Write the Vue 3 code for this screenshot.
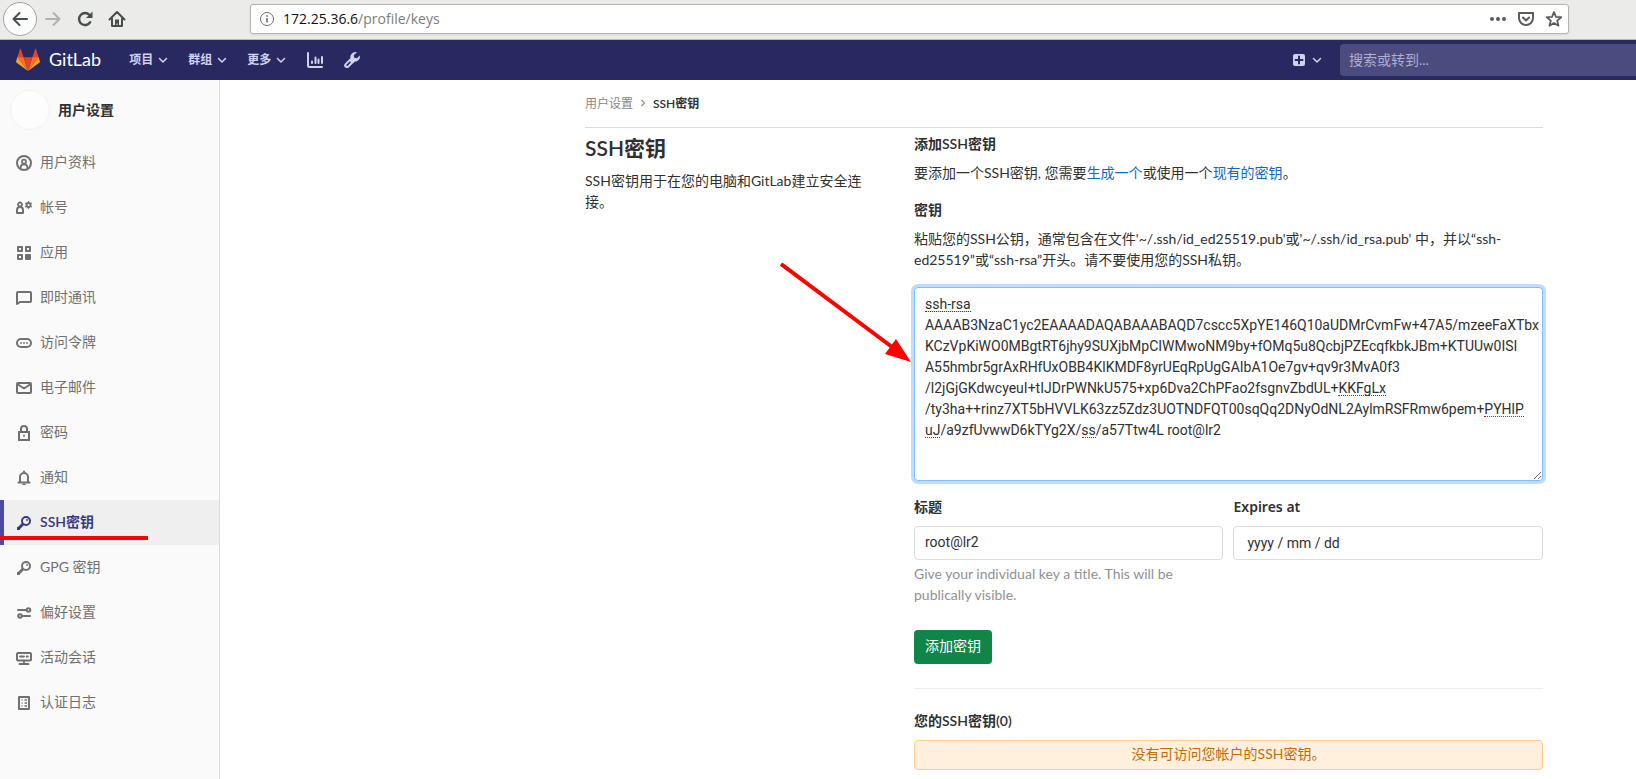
<script setup>
import { ref } from 'vue'

const sections = ['项目', '群组', '更多']

const links = [
  { label: '用户资料', icon: 'profile' },
  { label: '帐号', icon: 'account' },
  { label: '应用', icon: 'apps' },
  { label: '即时通讯', icon: 'chat' },
  { label: '访问令牌', icon: 'token' },
  { label: '电子邮件', icon: 'mail' },
  { label: '密码', icon: 'lock' },
  { label: '通知', icon: 'bell' },
  { label: 'SSH密钥', icon: 'key', active: true },
  { label: 'GPG 密钥', icon: 'key' },
  { label: '偏好设置', icon: 'prefs' },
  { label: '活动会话', icon: 'monitor' },
  { label: '认证日志', icon: 'log' },
]

const publicKey = ref(
  [
    'ssh-rsa',
    'AAAAB3NzaC1yc2EAAAADAQABAAABAQD7cscc5XpYE146Q10aUDMrCvmFw+47A5/mzeeFaXTbx',
    'KCzVpKiWO0MBgtRT6jhy9SUXjbMpCIWMwoNM9by+fOMq5u8QcbjPZEcqfkbkJBm+KTUUw0ISI',
    'A55hmbr5grAxRHfUxOBB4KlKMDF8yrUEqRpUgGAIbA1Oe7gv+qv9r3MvA0f3',
    '/l2jGjGKdwcyeuI+tIJDrPWNkU575+xp6Dva2ChPFao2fsgnvZbdUL+KKFgLx',
    '/ty3ha++rinz7XT5bHVVLK63zz5Zdz3UOTNDFQT00sqQq2DNyOdNL2AylmRSFRmw6pem+PYHlP',
    'uJ/a9zfUvwwD6kTYg2X/ss/a57Ttw4L root@lr2',
  ].join('\n')
)
const title = ref('root@lr2')
const address = ref('172.25.36.6/profile/keys')
</script>

<template>
  <div class="page">
    <div class="browser">
      <button class="tool back" aria-label="Back">
        <svg width="18" height="18" viewBox="0 0 18 18"><path d="M16 9H2.5M8.5 3l-6 6 6 6" fill="none" stroke="#4a4d4e" stroke-width="2" stroke-linecap="round" stroke-linejoin="round" /></svg>
      </button>
      <button class="tool" aria-label="Forward">
        <svg width="18" height="18" viewBox="0 0 18 18"><path d="M2 9h13.5M9.500 3l6 6-6 6" fill="none" stroke="#b0b1b0" stroke-width="2" stroke-linecap="round" stroke-linejoin="round" /></svg>
      </button>
      <button class="tool" aria-label="Reload">
        <svg width="18" height="18" viewBox="0 0 18 18"><path d="M14.200 12.200A6 6 0 1 1 13.500 5" fill="none" stroke="#4a4d4e" stroke-width="2.400" stroke-linecap="round" /><path d="M16.500 1.500V8h-6.500z" fill="#4a4d4e" /></svg>
      </button>
      <button class="tool" aria-label="Home">
        <svg width="18" height="18" viewBox="0 0 18 18"><path d="M1.500 9.500L9 2l7.500 7.500M4 8.500V16h10V8.500" fill="none" stroke="#4a4d4e" stroke-width="2" stroke-linecap="round" stroke-linejoin="round" /><path d="M7 9.500h4V16H9.500v-2.500h-1V16H7z" fill="#4a4d4e" /></svg>
      </button>
      <div class="address">
        <svg width="16" height="16" viewBox="0 0 16 16"><circle cx="8" cy="8" r="6.500" fill="none" stroke="#6b6b6b" /><path d="M8 7v4.500M8 4.200v1.600" stroke="#6b6b6b" stroke-width="1.600" /></svg>
        <div class="url" role="textbox" :aria-label="address"><span>172.25.36.6</span>/profile/keys</div>
        <button class="mini" aria-label="Page actions">
          <svg width="18" height="18" viewBox="0 0 18 18" fill="#5b5b5b"><circle cx="3" cy="9" r="2" /><circle cx="9" cy="9" r="2" /><circle cx="15" cy="9" r="2" /></svg>
        </button>
        <button class="mini" aria-label="Save">
          <svg width="18" height="18" viewBox="0 0 18 18" fill="none" stroke="#5b5b5b" stroke-width="2" stroke-linecap="round" stroke-linejoin="round"><path d="M2 3h14v5a7 7 0 0 1-14 0zM6 7.500l3 3 3-3" /></svg>
        </button>
        <button class="mini" aria-label="Bookmark">
          <svg width="18" height="18" viewBox="0 0 18 18" fill="none" stroke="#5b5b5b" stroke-width="1.800" stroke-linejoin="round"><path d="M9 2l2 4.800 5.200.4-4 3.400 1.300 5.100L9 13l-4.500 2.700 1.300-5.100-4-3.400 5.200-.4z" /></svg>
        </button>
      </div>
    </div>

    <header class="navbar">
      <a class="brand" href="#">
        <svg width="24" height="24" viewBox="0 0 36 36"><path fill="#e24329" d="M2 14l9.380 9v-9l-4-12.280c-.205-.632-1.176-.632-1.380 0zM34 14l-9.380 9v-9l4-12.280c.205-.632 1.176-.632 1.380 0z" /><path fill="#e24329" d="M18 34.380L24.380 14H11.620z" /><path fill="#fc6d26" d="M18 34.380L11.380 14H2zM18 34.380L24.620 14H34z" /><path fill="#fca326" d="M2 14L.1 20.160c-.18.565 0 1.200.5 1.560l17.420 12.660zM34 14l1.900 6.160c.18.565 0 1.200-.5 1.560L18 34.380z" /></svg>
        <span>GitLab</span>
      </a>
      <nav class="sections" aria-label="Main">
        <button v-for="s in sections" :key="s">
          {{ s }}
          <svg width="10" height="10" viewBox="0 0 10 10"><path d="M1.500 3.500L5 7l3.500-3.500" fill="none" stroke="#d1d1f0" stroke-width="1.500" stroke-linecap="round" stroke-linejoin="round" /></svg>
        </button>
        <a href="#" aria-label="Activity"><svg width="16" height="16" viewBox="0 0 16 16" fill="none" stroke="#d1d1f0" stroke-width="2" stroke-linecap="round"><path d="M1 1v12.500A1.500 1.500 0 0 0 2.500 15H15M5 9.500V11M8.500 5.500V11M11.500 7.500V11M15 5v6" /></svg></a>
        <a href="#" aria-label="Admin"><svg width="16" height="16" viewBox="0 0 16 16"><path d="M8.200 8.200L3 13.400" fill="none" stroke="#d1d1f0" stroke-width="5.500" stroke-linecap="round" /><path d="M14 .9A5 5 0 0 0 6.400 6l3.700 3.700A5 5 0 0 0 15.700 3.500L13 6.200 10.300 5.700 9.800 3.200 12.600.4z" fill="#d1d1f0" /><path d="M6 10.300L3.200 13.100" fill="none" stroke="#292961" stroke-width="1.600" stroke-linecap="round" /></svg></a>
      </nav>
      <div class="right">
        <button class="plus" aria-label="New">
          <svg width="12" height="12" viewBox="0 0 12 12"><rect width="12" height="12" rx="2" fill="#d1d1f0" /><path d="M6 2.500v7M2.500 6h7" stroke="#292961" stroke-width="2" stroke-linecap="round" /></svg>
          <svg width="10" height="10" viewBox="0 0 10 10"><path d="M1.500 3.500L5 7l3.500-3.500" fill="none" stroke="#d1d1f0" stroke-width="1.500" stroke-linecap="round" stroke-linejoin="round" /></svg>
        </button>
        <input class="search" type="text" placeholder="搜索或转到..." aria-label="搜索或转到" />
      </div>
    </header>

    <div class="body">
      <aside class="sidebar">
        <div class="context"><span class="avatar"></span><strong>用户设置</strong></div>
        <a v-for="l in links" :key="l.label" href="#" class="link" :class="{ active: l.active }">
          <svg width="16" height="16" viewBox="0 0 16 16" fill="none" stroke="currentColor" stroke-width="2" stroke-linecap="round" stroke-linejoin="round">
            <template v-if="l.icon === 'profile'"><circle cx="8" cy="8" r="7" /><circle cx="8" cy="6.700" r="2" stroke-width="1.700" /><path d="M4.700 13v-1c0-1.700 1.300-2.700 3.300-2.700s3.300 1 3.300 2.700v1" stroke-width="1.700" /></template>
            <template v-else-if="l.icon === 'account'"><circle cx="4" cy="4.500" r="2" stroke-width="1.800" /><path d="M1 13v-3a3 3 0 0 1 6 0v3z" /><circle cx="12.500" cy="5" r="2" /><path d="M12.500 1.700v6.600M9.700 3.300l5.600 3.400M9.700 6.700l5.600-3.400" stroke-width="1.300" /><circle cx="12.500" cy="5" r="1" stroke="none" fill="#fafafa" /></template>
            <template v-else-if="l.icon === 'apps'"><path d="M2 2h4v4H2zM10 2h4v4h-4zM2 10h4v4H2z" /><path d="M10 10h4v4h-4z" fill="currentColor" /></template>
            <path v-else-if="l.icon === 'chat'" d="M1 14V3a1 1 0 0 1 1-1h12a1 1 0 0 1 1 1v8a1 1 0 0 1-1 1H4z" />
            <template v-else-if="l.icon === 'token'"><rect x="1" y="4" width="14" height="8" rx="4" /><path d="M5 8h.01M8 8h.01M11 8h.01" stroke-width="1.800" /></template>
            <template v-else-if="l.icon === 'mail'"><rect x="1" y="3" width="14" height="10" rx="1" /><path d="M2 4.500l6 4 6-4" /></template>
            <template v-else-if="l.icon === 'lock'"><path d="M3 7h10v8H3zM5 7V4a3 3 0 0 1 6 0v3" stroke-linejoin="miter" /><path d="M8 10.800h.01" /></template>
            <template v-else-if="l.icon === 'bell'"><path d="M2.500 12.500h11M4 12V7a4 4 0 0 1 8 0v5M8 2v-.5" /><path d="M7 14.300h2" stroke-width="1.500" /></template>
            <template v-else-if="l.icon === 'key'"><circle cx="10" cy="6" r="4" /><path d="M7 9L2 14" stroke-width="3" stroke-linecap="butt" /><path d="M1 12h3v3H1z" stroke="none" fill="currentColor" /><path d="M11 5h.01" stroke-width="1.800" /></template>
            <template v-else-if="l.icon === 'prefs'"><path d="M2 5h8M14 11H7" /><circle cx="12.500" cy="5" r="1.800" /><circle cx="4" cy="11" r="1.800" /></template>
            <template v-else-if="l.icon === 'monitor'"><rect x="1" y="3" width="14" height="7.500" rx="1" /><path d="M4 6.500h4M10.500 6.500h1.500M8 11v2.500M3.500 14h9" stroke-width="1.800" /></template>
            <template v-else><rect x="3" y="2" width="10" height="12" /><path d="M5.500 5h1M8.500 5H11M5.500 8h1M8.500 8H11M5.500 11h1M8.500 11H11" stroke-width="1.500" stroke-linecap="butt" /></template>
          </svg>
          <span>{{ l.label }}</span>
        </a>
      </aside>

      <main class="content">
        <nav class="crumbs" aria-label="Breadcrumb">
          <a href="#">用户设置</a>
          <svg width="8" height="8" viewBox="0 0 8 8"><path d="M2.500 1l3 3-3 3" fill="none" stroke="#919191" stroke-width="1.300" /></svg>
          <strong>SSH密钥</strong>
        </nav>
        <div class="row">
          <section class="intro">
            <h4>SSH密钥</h4>
            <p>SSH密钥用于在您的电脑和GitLab建立安全连接。</p>
          </section>
          <section class="main">
            <h5>添加SSH密钥</h5>
            <p class="hint">要添加一个SSH密钥, 您需要<a href="#">生成一个</a>或使用一个<a href="#">现有的密钥</a>。</p>
            <form @submit.prevent>
              <label for="key">密钥</label>
              <p>粘贴您的SSH公钥，通常包含在文件'~/.ssh/id_ed25519.pub'或'~/.ssh/id_rsa.pub' 中，并以“ssh-ed25519”或“ssh-rsa”开头。请不要使用您的SSH私钥。</p>
              <div class="keybox">
                <textarea id="key" v-model="publicKey" rows="8" spellcheck="false"></textarea>
                <i class="typo t1"></i><i class="typo t2"></i><i class="typo t3"></i><i class="typo t4"></i><i class="typo t5"></i>
              </div>
              <div class="fields">
                <div>
                  <label for="title">标题</label>
                  <input id="title" v-model="title" type="text" />
                  <p class="help">Give your individual key a title. This will be publically visible.</p>
                </div>
                <div>
                  <label for="expires">Expires at</label>
                  <input id="expires" class="date" type="text" placeholder="yyyy / mm / dd" />
                </div>
              </div>
              <button class="submit" type="submit">添加密钥</button>
            </form>
            <hr />
            <h5>您的SSH密钥(0)</h5>
            <div class="alert">没有可访问您帐户的SSH密钥。</div>
          </section>
        </div>
        <svg class="arrow" width="132" height="100" viewBox="0 0 132 100"><path d="M1 1L112 84" stroke="#f00" stroke-width="4" /><path d="M131 99L116 76 105 91z" fill="#f00" /></svg>
      </main>
    </div>
    <div class="marker"></div>
  </div>
</template>

<style>
body {
  overflow: hidden;
}
</style>

<style scoped>
.page {
  position: relative;
  display: flex;
  flex-direction: column;
  min-height: 100vh;
  overflow: hidden;
  background: #fff;
  color: #303030;
  font: 14px/21px Lato, "Noto Sans CJK SC", sans-serif;
}
.page * {
  box-sizing: border-box;
}
button,
input,
textarea {
  margin: 0;
  font: inherit;
  color: inherit;
}
button {
  padding: 0;
  border: 0;
  background: none;
}
a {
  color: #1068bf;
  text-decoration: none;
}
svg {
  flex: none;
  display: block;
}
strong,
h4,
h5,
label {
  font-weight: 600;
}
p,
h4,
h5 {
  margin: 0;
}
.browser {
  display: flex;
  align-items: center;
  height: 40px;
  padding: 0 67px 2px 3px;
  background: #ebebea;
  border-bottom: 1px solid #b8b8b8;
}
.tool {
  display: grid;
  place-items: center;
  width: 32px;
  height: 32px;
}
.tool.back {
  width: 34px;
  height: 34px;
  border: 1px solid #a5a5a4;
  border-radius: 50%;
  background: #fcfcfc;
}
.address {
  display: flex;
  align-items: center;
  gap: 10px;
  flex: 1;
  height: 30px;
  margin-left: 117px;
  padding: 0 5px 0 8px;
  background: #fff;
  border: 1px solid #b4b4b2;
  border-radius: 3px;
  box-shadow: 0 1px 3px rgba(0, 0, 0, 0.08);
}
.url {
  flex: 1;
  margin-left: -2px;
  font-family: "Open Sans", sans-serif;
  font-size: 14px;
  color: #7d7d7d;
}
.url span {
  color: #111;
}
.navbar {
  display: flex;
  align-items: center;
  height: 40px;
  padding-left: 16px;
  background: #292961;
  color: #d1d1f0;
}
.brand {
  display: flex;
  align-items: center;
  gap: 9px;
  color: #fff;
  font-size: 18px;
}
.brand span {
  padding-bottom: 2px;
}
.sections {
  display: flex;
  align-items: center;
  gap: 20px;
  margin-left: 28px;
}
.sections button {
  display: flex;
  align-items: center;
  gap: 5px;
  padding-bottom: 1px;
  font-size: 12px;
  font-weight: 600;
}
.sections a {
  margin-left: 1px;
}
.right {
  display: flex;
  align-items: center;
  gap: 18px;
  margin-left: auto;
}
.plus {
  display: flex;
  align-items: center;
  gap: 7px;
}
.search {
  width: 296px;
  height: 32px;
  padding: 0 9px 2px;
  border: 0;
  border-radius: 4px 0 0 4px;
  background: #4b4b7d;
}
.search::placeholder {
  color: #aeaed3;
}
.body {
  display: flex;
  flex: 1;
}
.sidebar {
  flex: none;
  width: 220px;
  padding-top: 10px;
  background: #fafafa;
  border-right: 1px solid #dbdbdb;
}
.context {
  display: flex;
  align-items: center;
  gap: 8px;
  height: 40px;
  margin-bottom: 10px;
  padding-left: 10px;
}
.avatar {
  width: 40px;
  height: 40px;
  border: 1px solid #f2f2f2;
  border-radius: 50%;
  background: #fdfdfd;
}
.link {
  display: flex;
  align-items: center;
  gap: 8px;
  height: 45px;
  padding-left: 16px;
  color: #707070;
}
.link span,
.context strong {
  padding-bottom: 2px;
}
.link.active {
  background: #efefef;
  box-shadow: inset 4px 0 #4b4ba3;
  color: #393982;
  font-weight: 600;
}
.marker {
  position: absolute;
  left: 0;
  top: 536px;
  width: 148px;
  height: 4px;
  background: #f00;
}
.content {
  position: relative;
  flex: 1;
  min-width: 0;
  padding: 0 93px 0 365px;
}
.crumbs {
  display: flex;
  align-items: center;
  gap: 6px;
  height: 48px;
  padding-bottom: 1px;
  border-bottom: 1px solid #dbdbdb;
  font-size: 12px;
}
.crumbs a {
  color: #868686;
}
.row {
  display: flex;
  margin: 0 -16px;
}
.intro {
  width: 33.333%;
  padding: 5px 16px 0;
}
.main {
  flex: 1;
  padding: 5px 16px 0 15px;
}
h4 {
  margin-bottom: 8px;
  font-size: 21px;
  line-height: 29px;
}
h5 {
  margin-bottom: 8px;
  font-size: 14px;
  line-height: 21px;
}
.hint {
  margin-bottom: 16px;
}
label {
  display: block;
  margin-bottom: 8px;
}
label[for="expires"] {
  font-family: "Noto Sans", sans-serif;
}
.keybox {
  position: relative;
  margin: 17px 0 15px;
}
.fields input,
textarea {
  font-family: Roboto, "Noto Sans CJK SC", sans-serif;
}
textarea {
  display: block;
  width: 100%;
  height: 194px;
  padding: 6px 10px;
  border: 1px solid #80bdff;
  border-radius: 4px;
  outline: 0;
  box-shadow: 0 0 0 3px #bfdeff;
  white-space: pre;
  overflow: hidden;
  resize: vertical;
}
.typo {
  position: absolute;
  height: 1px;
  border-bottom: 1px dotted #e00;
}
.t1 { left: 11px; top: 24px; width: 46px; }
.t2 { left: 424px; top: 108px; width: 48px; }
.t3 { left: 570px; top: 129px; width: 40px; }
.t4 { left: 11px; top: 150px; width: 15px; }
.t5 { left: 168px; top: 150px; width: 14px; }
.fields {
  display: grid;
  grid-template-columns: 1fr 1fr;
  gap: 10px;
}
.fields label {
  margin-bottom: 9px;
}
.fields input {
  display: block;
  width: 100%;
  height: 34px;
  padding: 0 10px 2px;
  border: 1px solid #dbdbdb;
  border-radius: 4px;
  background: #fff;
}
.fields .date {
  padding: 0 13px;
}
.date::placeholder {
  color: #303030;
}
.help {
  max-width: 290px;
  margin-top: 3px;
  color: #919191;
}
.submit {
  height: 34px;
  margin-top: 25px;
  padding: 0 11px 4px;
  border-radius: 4px;
  background: #108548;
  color: #fff;
}
hr {
  margin: 24px 0 21px;
  border: 0;
  border-top: 1px solid #eee;
}
h5:last-of-type {
  margin-bottom: 9px;
}
.alert {
  height: 30px;
  border: 1px solid #fdd08f;
  border-radius: 4px;
  background: #ffefdc;
  color: #c26a05;
  line-height: 26px;
  text-align: center;
}
.arrow {
  position: absolute;
  left: 560px;
  top: 183px;
}
</style>
